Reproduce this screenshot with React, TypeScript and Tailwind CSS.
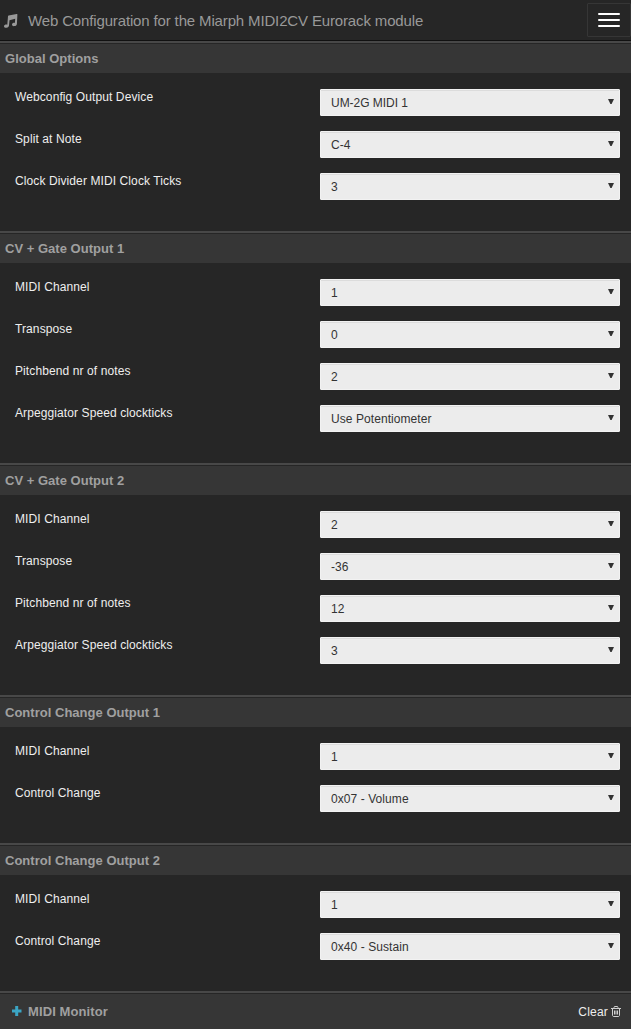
import React from "react";

type Row = [label: string, value: string];

const sections: { title: string; rows: Row[] }[] = [
  {
    title: "Global Options",
    rows: [
      ["Webconfig Output Device", "UM-2G MIDI 1"],
      ["Split at Note", "C-4"],
      ["Clock Divider MIDI Clock Ticks", "3"],
    ],
  },
  {
    title: "CV + Gate Output 1",
    rows: [
      ["MIDI Channel", "1"],
      ["Transpose", "0"],
      ["Pitchbend nr of notes", "2"],
      ["Arpeggiator Speed clockticks", "Use Potentiometer"],
    ],
  },
  {
    title: "CV + Gate Output 2",
    rows: [
      ["MIDI Channel", "2"],
      ["Transpose", "-36"],
      ["Pitchbend nr of notes", "12"],
      ["Arpeggiator Speed clockticks", "3"],
    ],
  },
  {
    title: "Control Change Output 1",
    rows: [
      ["MIDI Channel", "1"],
      ["Control Change", "0x07 - Volume"],
    ],
  },
  {
    title: "Control Change Output 2",
    rows: [
      ["MIDI Channel", "1"],
      ["Control Change", "0x40 - Sustain"],
    ],
  },
];

function Field({ label, value }: { label: string; value: string }) {
  return (
    <div className="flex h-[42px] items-start">
      <div className="w-[305px] text-[12px] leading-[17px] tracking-[0.1px] text-[#eeeeee]">{label}</div>
      <button className="flex h-[27px] w-[300px] items-center justify-between rounded-[1px] border border-[#f2f2f2] bg-[#ececec] pr-[5px] pl-[10px] text-[12px] leading-[17px] text-[#333333] shadow-[inset_0_1px_0_#dcdcdc]">
        <span className={value.startsWith("UM") ? "pt-px tracking-[-0.04px]" : "pt-px tracking-[0.07px]"}>
          {value}
        </span>
        <svg className="mb-[2px] h-[5px] w-[6px]" viewBox="0 0 6 5" fill="#333">
          <path d="M0 0h6L3.600 5H2.400z" />
        </svg>
      </button>
    </div>
  );
}

export default function App() {
  return (
    <div className="flex h-[1029px] w-full flex-col overflow-hidden bg-[#262626] font-['Liberation_Sans',Arial,sans-serif]">
      <header className="flex h-[41px] shrink-0 items-start justify-between border-b border-[#111111]">
        <div className="flex h-[42px] items-center pl-[4px] text-[#999999]">
          <svg className="mr-[10px] h-[14px] w-[14px]" viewBox="0 0 14 14" fill="currentColor">
            <path d="M12.700 0 4.600 1.500Q4.100 1.600 4 2.200L3.300 10.700C1.500 10.400 0 11 0 12.200c0 1.200 1.200 1.700 2.500 1.600C4 13.600 4.900 12.800 5 11.600L5.500 6.200 11.200 4.800 10.900 8.900C9.300 8.700 8 9.400 8 10.600c0 1.200 1.200 1.700 2.400 1.500 1.500-.2 2.400-1 2.500-2.200L13.400.6Q13.400-.1 12.700 0z" />
          </svg>
          <span className="text-[15px] leading-[20px] tracking-[-0.145px]">
            Web Configuration for the Miarph MIDI2CV Eurorack module
          </span>
        </div>
        <button className="mt-[3px] flex h-[34px] w-[44px] flex-col items-center justify-center gap-[4px] rounded-[1px] border border-[#363636]">
          <span className="h-[2px] w-[22px] rounded-[1px] bg-white" />
          <span className="h-[2px] w-[22px] rounded-[1px] bg-white" />
          <span className="h-[2px] w-[22px] rounded-[1px] bg-white" />
        </button>
      </header>
      {sections.map((s) => (
        <section key={s.title} className="shrink-0 border-t-2 border-[#484848]">
          <h2 className="flex h-[30px] items-center border-t border-[#262626] bg-[#363636] pl-[5px] text-[13px] leading-[18px] font-bold tracking-[0.02px] text-[#a0a0a0]">
            {s.title}
          </h2>
          <div className="py-[16px] pl-[15px]">
            {s.rows.map(([label, value]) => (
              <Field key={label} label={label} value={value} />
            ))}
          </div>
        </section>
      ))}
      <footer className="flex h-[38px] shrink-0 flex-col border-t-2 border-[#484848]">
        <div className="flex flex-1 items-center justify-between border-t border-[#262626] bg-[#363636] pr-[10px] pl-[12px]">
          <div className="flex items-center gap-[6px] text-[13px] font-bold tracking-[0.1px] text-[#a0a0a0]">
            <svg className="mb-px h-[10px] w-[10px]" viewBox="0 0 10 10" fill="#3ba5c4">
              <path d="M3.200 0h3v3.500h3.300v3H6.200V10h-3V6.500H0v-3h3.200z" />
            </svg>
            MIDI Monitor
          </div>
          <div className="flex items-center gap-[3px] text-[12px] tracking-[0.2px] text-[#eeeeee]">
            Clear
            <svg className="h-[11px] w-[10px]" viewBox="0 0 10 11" fill="none" stroke="#d0d0d0" strokeWidth="1">
              <path d="M0 2.500h10M3 2.500v-1l.5-1h3l.5 1v1M1.500 2.500v7l.8 1h5.400l.8-1v-7M3.500 4.500v4M5 4.500v4M6.500 4.500v4" />
            </svg>
          </div>
        </div>
      </footer>
    </div>
  );
}
